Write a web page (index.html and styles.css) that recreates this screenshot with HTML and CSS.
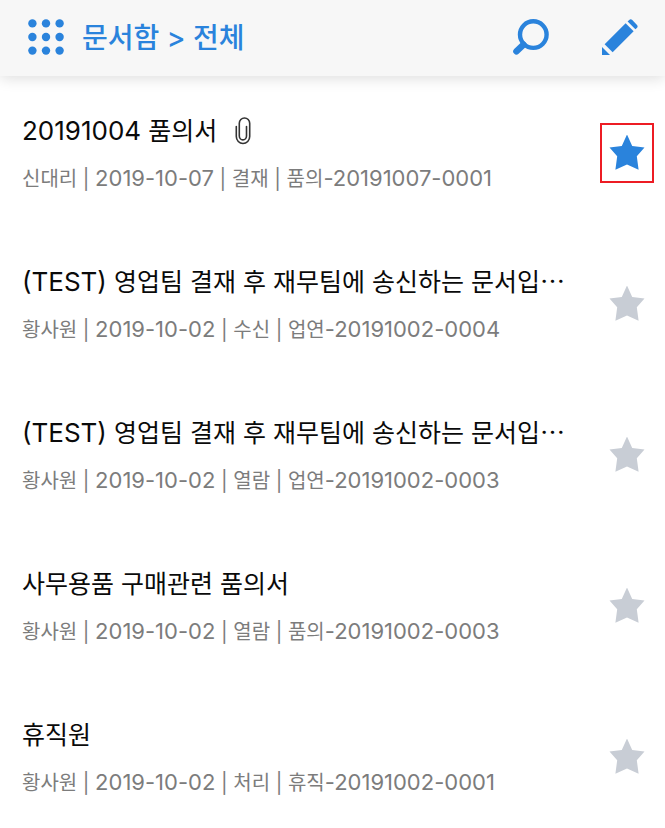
FILE: index.html
```
<!DOCTYPE html>
<html lang="ko">
<head>
    <meta charset="UTF-8">
    <meta name="viewport" content="width=device-width, initial-scale=1.0">
    <title>문서함 &gt; 전체</title>
    <link rel="stylesheet" href="styles.css">
</head>
<body>
    <svg width="0" height="0" class="symbols" aria-hidden="true">
        <symbol id="star" viewBox="0 1 36 36">
            <path d="M18 0.5 L23.2 12 L35.5 13.4 L27.8 22.2 L29.6 35.8 L18 30.4 L6.4 35.8 L8.2 22.2 L0.5 13.4 L12.8 12 Z"/>
        </symbol>
    </svg>

    <header class="header">
        <button type="button" class="icon-button" aria-label="메뉴">
            <svg width="36" height="36" viewBox="0 0 36 36" fill="currentColor">
                <circle cx="4.4" cy="4.4" r="4.2"/>
                <circle cx="18" cy="4.4" r="4.2"/>
                <circle cx="31.6" cy="4.4" r="4.2"/>
                <circle cx="4.4" cy="18" r="4.2"/>
                <circle cx="18" cy="18" r="4.2"/>
                <circle cx="31.6" cy="18" r="4.2"/>
                <circle cx="4.4" cy="31.6" r="4.2"/>
                <circle cx="18" cy="31.6" r="4.2"/>
                <circle cx="31.6" cy="31.6" r="4.2"/>
            </svg>
        </button>
        <h1 class="header-title">문서함 &gt; 전체</h1>
        <div class="header-actions">
            <button type="button" class="icon-button" aria-label="검색">
                <svg width="36" height="36" viewBox="0 0 36 36" fill="none" stroke="currentColor">
                    <circle cx="20.3" cy="15.6" r="13.3" stroke-width="4.4"/>
                    <path d="M10.5 25.6 L3.4 32.4" stroke-width="6.4" stroke-linecap="round"/>
                </svg>
            </button>
            <button type="button" class="icon-button" aria-label="작성">
                <svg width="36" height="36" viewBox="0 0 36 36" fill="currentColor">
                    <path d="M0 36 V28 L8 36 Z"/>
                    <path d="M2.6 25.2 L23.6 4.2 L31.6 12.2 L10.6 33.2 Z"/>
                    <path d="M25.6 2.4 L27.2 0.9 Q28.7 -0.4 30.3 1 L35 5.9 Q36.2 7.3 35.1 8.7 L33.4 10.3 Z"/>
                </svg>
            </button>
        </div>
    </header>

    <ul class="doc-list">
        <li class="doc">
            <div class="doc-body">
                <h2 class="doc-title"><span class="latin">20191004</span> 품의서<svg class="clip" width="16" height="28" viewBox="0 0 16 28" fill="none" stroke="#333" stroke-width="1.6" stroke-linecap="round"><path d="M1.3 9.5 V19.5 A6.7 7 0 0 0 14.7 19.5 V6.2 A5.2 5.2 0 0 0 4.3 6.2 V19 A3.6 3.9 0 0 0 11.5 19 V9.5"/></svg></h2>
                <p class="doc-meta">신대리 | <span class="latin">2019-10-07</span> | 결재 | 품의<span class="latin">-20191007-0001</span></p>
            </div>
            <button type="button" class="star on" aria-label="중요 표시" aria-pressed="true"><svg width="36" height="36"><use href="#star"/></svg></button>
        </li>
        <li class="doc">
            <div class="doc-body">
                <h2 class="doc-title"><span class="latin">(TEST)</span> 영업팀 결재 후 재무팀에 송신하는 문서입⋯</h2>
                <p class="doc-meta">황사원 | <span class="latin">2019-10-02</span> | 수신 | 업연<span class="latin">-20191002-0004</span></p>
            </div>
            <button type="button" class="star" aria-label="중요 표시" aria-pressed="false"><svg width="36" height="36"><use href="#star"/></svg></button>
        </li>
        <li class="doc">
            <div class="doc-body">
                <h2 class="doc-title"><span class="latin">(TEST)</span> 영업팀 결재 후 재무팀에 송신하는 문서입⋯</h2>
                <p class="doc-meta">황사원 | <span class="latin">2019-10-02</span> | 열람 | 업연<span class="latin">-20191002-0003</span></p>
            </div>
            <button type="button" class="star" aria-label="중요 표시" aria-pressed="false"><svg width="36" height="36"><use href="#star"/></svg></button>
        </li>
        <li class="doc">
            <div class="doc-body">
                <h2 class="doc-title">사무용품 구매관련 품의서</h2>
                <p class="doc-meta">황사원 | <span class="latin">2019-10-02</span> | 열람 | 품의<span class="latin">-20191002-0003</span></p>
            </div>
            <button type="button" class="star" aria-label="중요 표시" aria-pressed="false"><svg width="36" height="36"><use href="#star"/></svg></button>
        </li>
        <li class="doc">
            <div class="doc-body">
                <h2 class="doc-title">휴직원</h2>
                <p class="doc-meta">황사원 | <span class="latin">2019-10-02</span> | 처리 | 휴직<span class="latin">-20191002-0001</span></p>
            </div>
            <button type="button" class="star" aria-label="중요 표시" aria-pressed="false"><svg width="36" height="36"><use href="#star"/></svg></button>
        </li>
    </ul>
</body>
</html>
```
FILE: styles.css
```
* {
    box-sizing: border-box;
}
body {
    margin: 0;
    background: #fff;
    color: #0a0a0a;
    font-family: Inter, "Noto Sans CJK KR", sans-serif;
}
h1, h2, p, ul {
    margin: 0;
    padding: 0;
}
button {
    padding: 0;
    border: none;
    background: none;
    cursor: pointer;
}
svg {
    display: block;
}
.symbols {
    position: absolute;
}
.header {
    display: flex;
    align-items: center;
    height: 76px;
    padding: 0 27px 2px 28px;
    background: #f7f7f7;
    color: #2a83dc;
    box-shadow: 0 2px 14px rgba(0, 0, 0, 0.14);
}
.icon-button {
    color: inherit;
}
.header-title {
    margin-left: 18px;
    padding-top: 2px;
    font-size: 28px;
    font-weight: 500;
    line-height: 36px;
}
.header-actions {
    display: flex;
    gap: 53px;
    margin-left: auto;
}
.doc-list {
    list-style: none;
}
.doc {
    display: flex;
    align-items: center;
    gap: 12px;
    padding: 37px 11px 34px 22px;
}
.doc-body {
    flex: 1;
    min-width: 0;
}
.doc-title {
    height: 36px;
    font-size: 25px;
    font-weight: 400;
    line-height: 36px;
    white-space: nowrap;
}
.doc-title .latin {
    font-size: 26px;
}
.doc-meta {
    height: 30px;
    margin-top: 14px;
    color: #7c7c7c;
    font-size: 20px;
    line-height: 30px;
    white-space: nowrap;
}
.doc-meta .latin {
    font-size: 22px;
}
.clip {
    display: inline-block;
    margin-left: 18px;
    vertical-align: -5px;
}
.star {
    display: flex;
    align-items: center;
    justify-content: center;
    width: 54px;
    height: 60px;
    fill: #c8cdd5;
}
.star.on {
    border: 2px solid #ed1c24;
    fill: #2a83dc;
}
```
